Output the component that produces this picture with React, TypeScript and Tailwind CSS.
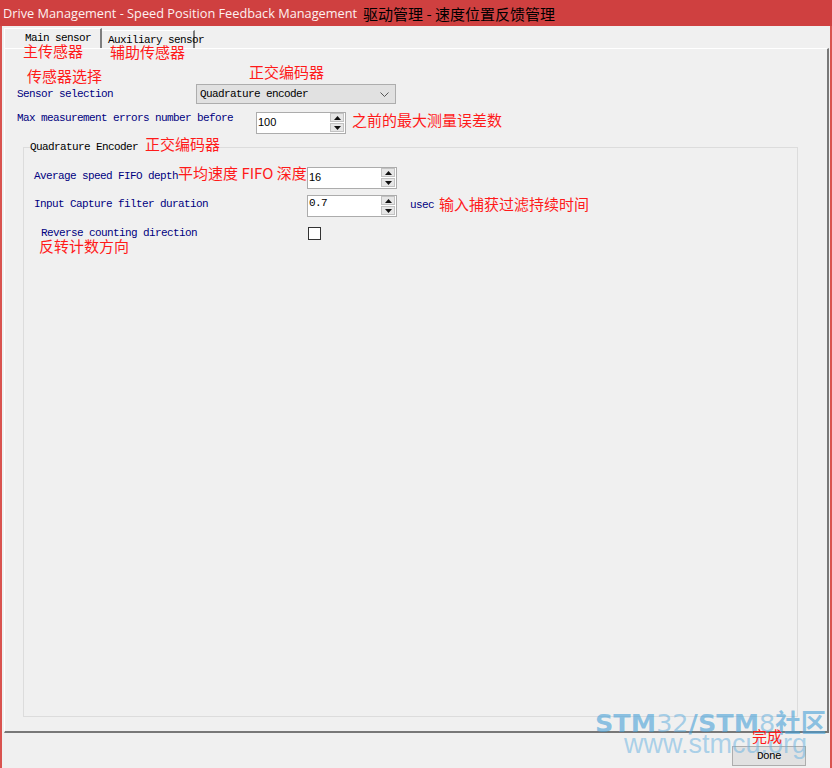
import React from "react";

// Shared text styles for the dialog
const mono = "block font-['Liberation_Mono',monospace] text-[11px] leading-[12px] tracking-[-0.6px] whitespace-nowrap";
const label = "block font-['Liberation_Mono',monospace] text-[11px] leading-[12px] tracking-[-0.6px] whitespace-nowrap text-[#000080]";
const note = "block font-['Noto_Sans_CJK_SC',sans-serif] text-[15px] leading-[15px] text-[#ff1a1a] whitespace-nowrap";

function Arrow({ up }: { up?: boolean }) {
  return (
    <svg width="7" height="4" viewBox="0 0 7 4">
      <polygon points={up ? "0,4 3.5,0 7,4" : "0,0 3.5,4 7,0"} fill="#111" />
    </svg>
  );
}

function Spin({ value, monoText }: { value: string; monoText?: boolean }) {
  return (
    <div className="w-[90px] h-[22px] shrink-0 border border-[#acacac] bg-white flex justify-between pl-[1px] pr-[1px]">
      {monoText ? (
        <span className="block font-['Liberation_Mono',monospace] text-[11px] leading-[12px] tracking-[-0.6px] text-black pt-[1px]">
          {value}
        </span>
      ) : (
        <span className="block font-['Liberation_Sans',Arial,sans-serif] text-[11px] leading-[12px] text-black pt-[3px]">
          {value}
        </span>
      )}
      <div className="w-[14px] flex flex-col gap-px">
        <div className="h-[9px] bg-[#e6e6e6] border border-[#c2c2c2] flex items-center justify-center">
          <Arrow up />
        </div>
        <div className="h-[9px] bg-[#e6e6e6] border border-[#c2c2c2] flex items-center justify-center">
          <Arrow />
        </div>
      </div>
    </div>
  );
}

export default function App() {
  return (
    <div className="relative w-[832px] h-[768px] overflow-hidden bg-[#f0f0f0] flex flex-col leading-[12px]">
      {/* Title bar */}
      <div className="h-[26px] shrink-0 bg-[#cf4040] flex items-center pl-[3px] whitespace-nowrap">
        <span className="font-['Open_Sans',sans-serif] text-[12.75px] leading-none text-[#fdf1f1]">
          Drive Management - Speed Position Feedback Management
        </span>
        <span className="ml-[6px] font-['Noto_Sans_CJK_SC',sans-serif] text-[15px] leading-none text-black">
          驱动管理 - 速度位置反馈管理
        </span>
      </div>

      {/* Window body */}
      <div className="flex-1 flex flex-col border-l-2 border-r-2 border-[#d9534f]">
        {/* Tabs */}
        <div className="h-[22px] pt-[2px] pl-[2px] flex items-end">
          <div className="w-[98px] h-[20px] border-t border-l border-white border-r-2 border-r-[#7f7f7f] pl-[20px] pt-[3px]">
            <span className={`${mono} text-black`}>Main sensor</span>
          </div>
          <div className="w-[93px] h-[18px] border-t border-white border-r-2 border-r-[#7f7f7f] pl-[6px] pt-[3px] whitespace-nowrap">
            <span className={`${mono} text-black`}>Auxiliary sensor</span>
          </div>
        </div>

        {/* Tab page */}
        <div className="ml-[2px] w-[825px] h-[685px] border-t border-l border-white border-r-2 border-b-2 border-r-[#787878] border-b-[#787878] flex flex-col">
          <div className="mt-[35px] h-[20px] flex items-center">
            <div className="w-[191px] pl-[12px]">
              <span className={label}>Sensor selection</span>
            </div>
            <div className="w-[200px] h-[20px] bg-[#e1e1e1] border border-[#adadad] flex items-center justify-between pl-[3px] pr-[6px]">
              <span className={`${mono} text-black`}>Quadrature encoder</span>
              <svg width="9" height="5" viewBox="0 0 9 5">
                <polyline points="0.5,0.5 4.5,4.5 8.5,0.5" fill="none" stroke="#555" strokeWidth="1" />
              </svg>
            </div>
          </div>

          <div className="mt-[8px] h-[22px] flex items-start">
            <div className="w-[251px] pl-[12px]">
              <span className={label}>Max measurement errors number before</span>
            </div>
            <Spin value="100" />
            <span className={`${note} ml-[6px]`}>之前的最大测量误差数</span>
          </div>

          {/* Quadrature encoder group */}
          <div className="mt-[13px] ml-[18px] w-[775px] h-[570px] border border-[#dcdcdc] flex flex-col">
            <div className="-mt-[12px] ml-[6px] self-start bg-[#f0f0f0] flex items-baseline">
              <span className={`${mono} text-black`}>Quadrature Encoder</span>
              <span className={`${note} ml-[7px]`}>正交编码器</span>
            </div>

            <div className="mt-[14px] h-[22px] flex items-start">
              <div className="w-[283px] pl-[10px] flex items-start">
                <span className={`${label} pt-[3px]`}>Average speed FIFO depth</span>
                <span className={`${note} -mt-[2px]`}>平均速度 FIFO 深度</span>
              </div>
              <Spin value="16" />
            </div>

            <div className="mt-[6px] h-[22px] flex items-start">
              <div className="w-[283px] pl-[10px]">
                <span className={`${label} pt-[3px]`}>Input Capture filter duration</span>
              </div>
              <Spin value="0.7" monoText />
              <span className={`${label} ml-[13px] pt-[4px]`}>usec</span>
              <span className={`${note} ml-[5px] pt-[1px]`}>输入捕获过滤持续时间</span>
            </div>

            <div className="mt-[10px] flex items-start">
              <div className="w-[284px] pl-[17px]">
                <span className={label}>Reverse counting direction</span>
              </div>
              <div className="w-[13px] h-[13px] border border-[#333333] bg-white" />
            </div>
            <div className="-mt-[2px] pl-[15px]">
              <span className={note}>反转计数方向</span>
            </div>
          </div>
        </div>

        <div className="mt-[13px] flex justify-end pr-[24px]">
          <div className="w-[74px] h-[20px] bg-[#e1e1e1] border border-[#adadad] flex items-center justify-center">
            <span className={`${mono} text-black`}>Done</span>
          </div>
        </div>
      </div>

      {/* Red callouts over the dialog */}
      <span className={`${note} absolute left-[23px] top-[43px]`}>主传感器</span>
      <span className={`${note} absolute left-[110px] top-[44px]`}>辅助传感器</span>
      <span className={`${note} absolute left-[27px] top-[68px]`}>传感器选择</span>
      <span className={`${note} absolute left-[249px] top-[64px]`}>正交编码器</span>

      {/* Site watermark */}
      <div className="absolute left-[595px] top-[708px] whitespace-nowrap font-['DejaVu_Sans',sans-serif] text-[25.5px] leading-none text-[rgba(70,160,215,0.6)]">
        <span className="font-bold">STM</span>
        <span className="text-[rgba(90,170,220,0.5)]">32</span>
        <span className="font-bold">/STM</span>
        <span className="text-[rgba(90,170,220,0.5)]">8</span>
        <span className="font-bold font-['Noto_Sans_CJK_SC',sans-serif]">社区</span>
      </div>
      <div className="absolute left-[624px] top-[731px] whitespace-nowrap font-['Liberation_Sans',Arial,sans-serif] text-[27px] leading-none text-[rgba(110,180,225,0.55)]">
        www.stmcu.org
      </div>

      <span className={`${note} absolute left-[752px] top-[728px]`}>完成</span>
    </div>
  );
}
